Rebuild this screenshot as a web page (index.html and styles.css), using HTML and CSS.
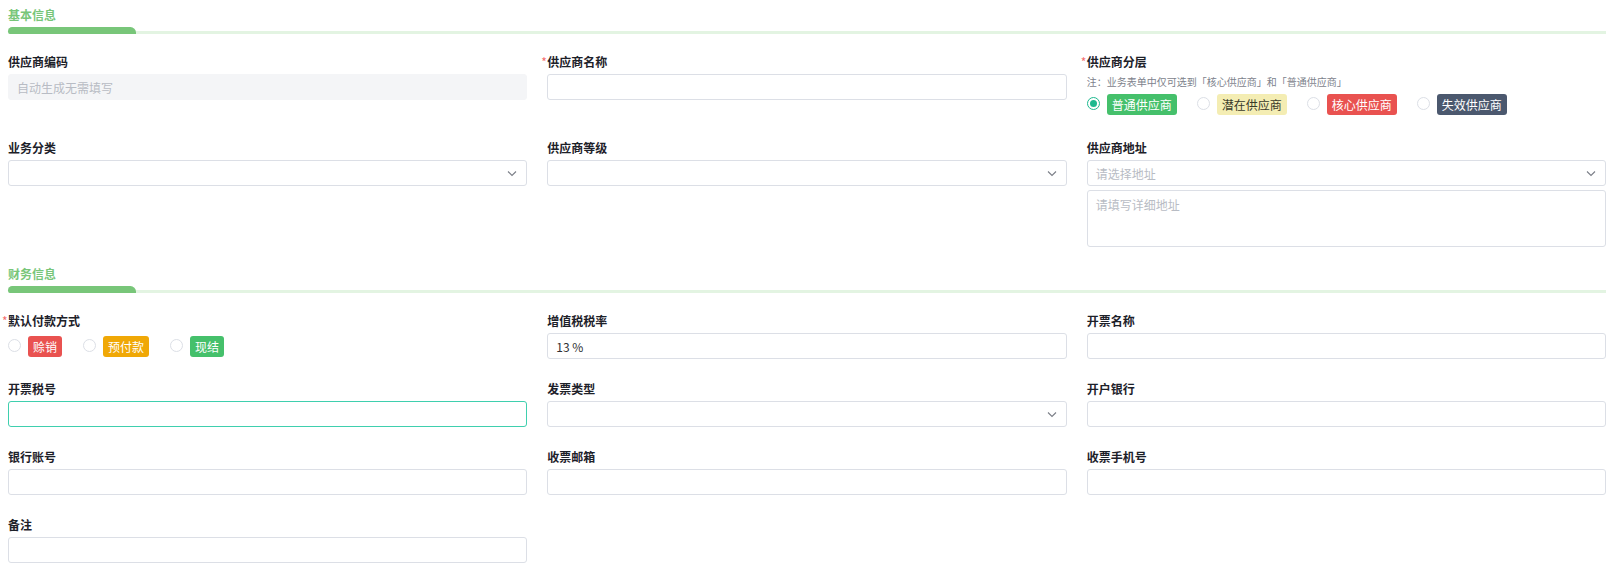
FILE: index.html
```html
<!DOCTYPE html>
<html lang="zh-CN">
<head>
  <meta charset="UTF-8">
  <meta name="viewport" content="width=device-width, initial-scale=1.0">
  <title>供应商信息</title>
  <link rel="stylesheet" href="styles.css">
</head>
<body>
  <div class="page">

    <div class="section-title">
      <span class="section-name">基本信息</span>
      <div class="section-bar"><span></span></div>
    </div>

    <div class="form-row">
      <div class="form-item">
        <label>供应商编码</label>
        <div class="input disabled"><span class="placeholder">自动生成无需填写</span></div>
      </div>
      <div class="form-item">
        <label><span class="req">*</span>供应商名称</label>
        <div class="input"></div>
      </div>
      <div class="form-item">
        <label><span class="req">*</span>供应商分层</label>
        <div class="note">注：业务表单中仅可选到「核心供应商」和「普通供应商」</div>
        <div class="radio-group">
          <div class="radio checked"><i></i><span class="tag green">普通供应商</span></div>
          <div class="radio"><i></i><span class="tag yellow">潜在供应商</span></div>
          <div class="radio"><i></i><span class="tag red">核心供应商</span></div>
          <div class="radio"><i></i><span class="tag slate">失效供应商</span></div>
        </div>
      </div>
    </div>

    <div class="form-row">
      <div class="form-item">
        <label>业务分类</label>
        <div class="input select">
          <svg class="arrow" width="12" height="12" viewBox="0 0 12 12"><path d="M2 4.5l4 4 4-4" fill="none" stroke="#7a7e87" stroke-width="1.1"/></svg>
        </div>
      </div>
      <div class="form-item">
        <label>供应商等级</label>
        <div class="input select">
          <svg class="arrow" width="12" height="12" viewBox="0 0 12 12"><path d="M2 4.5l4 4 4-4" fill="none" stroke="#7a7e87" stroke-width="1.1"/></svg>
        </div>
      </div>
      <div class="form-item">
        <label>供应商地址</label>
        <div class="input select">
          <span class="placeholder">请选择地址</span>
          <svg class="arrow" width="12" height="12" viewBox="0 0 12 12"><path d="M2 4.5l4 4 4-4" fill="none" stroke="#7a7e87" stroke-width="1.1"/></svg>
        </div>
        <div class="textarea"><span class="placeholder">请填写详细地址</span></div>
      </div>
    </div>

    <div class="section-title">
      <span class="section-name">财务信息</span>
      <div class="section-bar"><span></span></div>
    </div>

    <div class="form-row">
      <div class="form-item">
        <label><span class="req">*</span>默认付款方式</label>
        <div class="radio-group short">
          <div class="radio"><i></i><span class="tag red">赊销</span></div>
          <div class="radio"><i></i><span class="tag orange">预付款</span></div>
          <div class="radio"><i></i><span class="tag green">现结</span></div>
        </div>
      </div>
      <div class="form-item">
        <label>增值税税率</label>
        <div class="input"><span class="value">13 %</span></div>
      </div>
      <div class="form-item">
        <label>开票名称</label>
        <div class="input"></div>
      </div>
    </div>

    <div class="form-row">
      <div class="form-item">
        <label>开票税号</label>
        <div class="input focused"></div>
      </div>
      <div class="form-item">
        <label>发票类型</label>
        <div class="input select">
          <svg class="arrow" width="12" height="12" viewBox="0 0 12 12"><path d="M2 4.5l4 4 4-4" fill="none" stroke="#7a7e87" stroke-width="1.1"/></svg>
        </div>
      </div>
      <div class="form-item">
        <label>开户银行</label>
        <div class="input"></div>
      </div>
    </div>

    <div class="form-row">
      <div class="form-item">
        <label>银行账号</label>
        <div class="input"></div>
      </div>
      <div class="form-item">
        <label>收票邮箱</label>
        <div class="input"></div>
      </div>
      <div class="form-item">
        <label>收票手机号</label>
        <div class="input"></div>
      </div>
    </div>

    <div class="form-row">
      <div class="form-item">
        <label>备注</label>
        <div class="input"></div>
      </div>
    </div>

  </div>
</body>
</html>
```

FILE: styles.css
```css
:root {
  --green: #78c679;
  --green-light: #e3f4e2;
  --teal: #1db98f;
  --border: #dcdfe6;
  --label: #1d2129;
  --radius: 3px;
}

body {
  margin: 0;
  font-family: "Noto Sans CJK SC", "Noto Sans", sans-serif;
  font-size: 12px;
  color: var(--label);
  background: #fff;
}

.page {
  width: 1598px;
  padding: 8px 0 0 8px;
}

/* section header */
.section-title {
  margin-bottom: 18px;
}

.section-name {
  display: block;
  line-height: 14px;
  font-size: 12px;
  font-weight: 700;
  color: var(--green);
}

.section-bar {
  margin-top: 5px;
  height: 7px;
  position: relative;
}

.section-bar::after {
  content: "";
  position: absolute;
  left: 0;
  right: 0;
  bottom: 0;
  height: 3px;
  background: var(--green-light);
}

.section-bar span {
  position: relative;
  z-index: 1;
  display: block;
  width: 128px;
  height: 7px;
  background: var(--green);
  border-radius: 6px 8px 0 4px;
}

/* grid */
.form-row {
  display: grid;
  grid-template-columns: repeat(3, 1fr);
  column-gap: 20px;
}

.form-item {
  margin-bottom: 20px;
}

.form-item label {
  position: relative;
  display: block;
  line-height: 20px;
  margin-bottom: 2px;
  font-weight: 700;
  font-size: 12px;
  color: var(--label);
}

.req {
  position: absolute;
  left: -6px;
  top: 0;
  z-index: 2;
  color: #f56c6c;
  font-weight: 400;
}

.note {
  line-height: 16px;
  font-size: 10px;
  color: #7d828c;
}

/* inputs */
.input {
  box-sizing: border-box;
  height: 26px;
  border: 1px solid var(--border);
  border-radius: var(--radius);
  display: flex;
  align-items: center;
  padding: 0 8px;
  position: relative;
  background: #fff;
}

.input.disabled {
  background: #f4f5f7;
  border-color: #f4f5f7;
}

.input.focused {
  border-color: #3fcfae;
}

.input.select .arrow {
  position: absolute;
  right: 8px;
  top: 6px;
}

.placeholder {
  color: #b8bcc4;
  font-size: 12px;
}

.value {
  color: #303133;
  font-size: 12px;
}

.textarea {
  box-sizing: border-box;
  height: 57px;
  margin-top: 4px;
  border: 1px solid var(--border);
  border-radius: var(--radius);
  padding: 5px 8px;
  line-height: 18px;
}

/* radios */
.radio-group {
  height: 28px;
  display: flex;
  align-items: center;
  gap: 20px;
}

.radio-group.short {
  height: 26px;
  gap: 21px;
}

.radio {
  display: flex;
  align-items: center;
  gap: 7px;
}

.radio i {
  box-sizing: border-box;
  width: 13px;
  height: 13px;
  border: 1px solid #dcdfe6;
  border-radius: 50%;
  margin-top: -2px;
  background: #fff;
}

.radio.checked i {
  border-color: var(--teal);
  position: relative;
}

.radio.checked i::after {
  content: "";
  position: absolute;
  left: 2px;
  top: 2px;
  width: 7px;
  height: 7px;
  border-radius: 50%;
  background: var(--teal);
}

.tag {
  display: inline-block;
  height: 21px;
  line-height: 21px;
  padding: 0 5px;
  border-radius: 3px;
  font-size: 12px;
  color: #fff;
}

.tag.green { background: #45c06b; }
.tag.yellow { background: #f4edb3; color: #3a3a2a; }
.tag.red { background: #e95250; }
.tag.slate { background: #4b586e; }
.tag.orange { background: #f0a806; }
```
